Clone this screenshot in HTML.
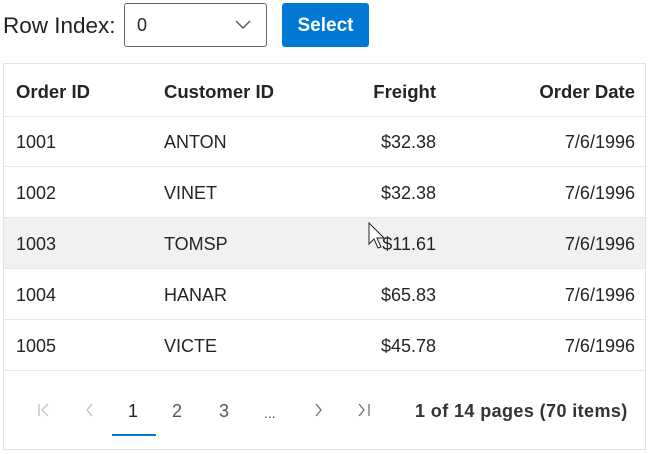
<!DOCTYPE html>
<html><head><style>
body{margin:0;width:649px;height:454px;background:#fff;font-family:"Liberation Sans",sans-serif;position:relative;overflow:hidden;color:#242424}
.a{position:absolute;white-space:nowrap}
.lbl{left:3px;top:13px;font-size:22.5px;color:#222}
.sel{left:124px;top:3px;width:141px;height:42px;border:1px solid #666;border-radius:3px;box-sizing:content-box}
.btn{left:282px;top:3px;width:87px;height:44px;background:#0078d4;border-radius:3px;color:#fff;font-weight:bold;font-size:19px;text-align:center;line-height:46px}
.grid{left:3px;top:63px;width:641px;height:385px;border:1px solid #e3e3e3}
.row{position:absolute;left:0;width:641px;border-bottom:1px solid #e6e6e6;font-size:18px}
.row span{position:absolute;top:0}
.h{font-weight:bold;font-size:18.5px}
.c1{left:12px}.c2{left:160px}.c3{right:209px}.c4{right:10px}
.pg{font-size:18px;color:#555}
</style></head><body>
<div class="a lbl">Row Index:</div>
<div class="a sel"><span class="a" style="left:12px;top:11px;font-size:18px">0</span>
<svg class="a" style="left:110px;top:16px" width="16" height="10"><path d="M1 1 L8 8 L15 1" stroke="#555" stroke-width="1.4" fill="none"/></svg></div>
<div class="a btn">Select</div>
<div class="a grid">
<div class="row h" style="top:0;height:52px;line-height:56px"><span class="c1">Order ID</span><span class="c2">Customer ID</span><span class="c3">Freight</span><span class="c4">Order Date</span></div>
<div class="row" style="top:52px;height:50px;line-height:52px"><span class="c1">1001</span><span class="c2">ANTON</span><span class="c3">$32.38</span><span class="c4">7/6/1996</span></div>
<div class="row" style="top:103px;height:50px;line-height:52px"><span class="c1">1002</span><span class="c2">VINET</span><span class="c3">$32.38</span><span class="c4">7/6/1996</span></div>
<div class="row" style="top:154px;height:50px;line-height:52px;background:#f2f1f0"><span class="c1">1003</span><span class="c2">TOMSP</span><span class="c3">$11.61</span><span class="c4">7/6/1996</span></div>
<div class="row" style="top:205px;height:50px;line-height:52px"><span class="c1">1004</span><span class="c2">HANAR</span><span class="c3">$65.83</span><span class="c4">7/6/1996</span></div>
<div class="row" style="top:256px;height:50px;line-height:52px"><span class="c1">1005</span><span class="c2">VICTE</span><span class="c3">$45.78</span><span class="c4">7/6/1996</span></div>
</div>
<svg class="a" style="left:36px;top:402px" width="16" height="16"><path d="M3 2V14M12 2L6 8L12 14" stroke="#bbb" stroke-width="1.2" fill="none"/></svg>
<svg class="a" style="left:82px;top:402px" width="16" height="16"><path d="M10 2L5 8L10 14" stroke="#bbb" stroke-width="1.2" fill="none"/></svg>
<div class="a pg" style="left:128px;top:401px;color:#222">1</div>
<div class="a" style="left:112px;top:434px;width:44px;height:2px;background:#0078d4"></div>
<div class="a pg" style="left:172px;top:401px">2</div>
<div class="a pg" style="left:219px;top:401px">3</div>
<div class="a pg" style="left:264px;top:401px;font-size:14px;top:405px">...</div>
<svg class="a" style="left:310px;top:402px" width="16" height="16"><path d="M6 2L11 8L6 14" stroke="#666" stroke-width="1.2" fill="none"/></svg>
<svg class="a" style="left:356px;top:402px" width="16" height="16"><path d="M3 2L8 8L3 14M13 2V14" stroke="#666" stroke-width="1.2" fill="none"/></svg>
<div class="a" style="left:415px;top:401px;font-size:18px;color:#333;font-weight:bold;letter-spacing:0.4px">1 of 14 pages (70 items)</div>
<svg class="a" style="left:368px;top:222px" width="20" height="30"><path d="M1 1V22L6 17L10 26L13 25L9 16H16Z" fill="#fff" stroke="#222" stroke-width="1"/></svg>
</body></html>
